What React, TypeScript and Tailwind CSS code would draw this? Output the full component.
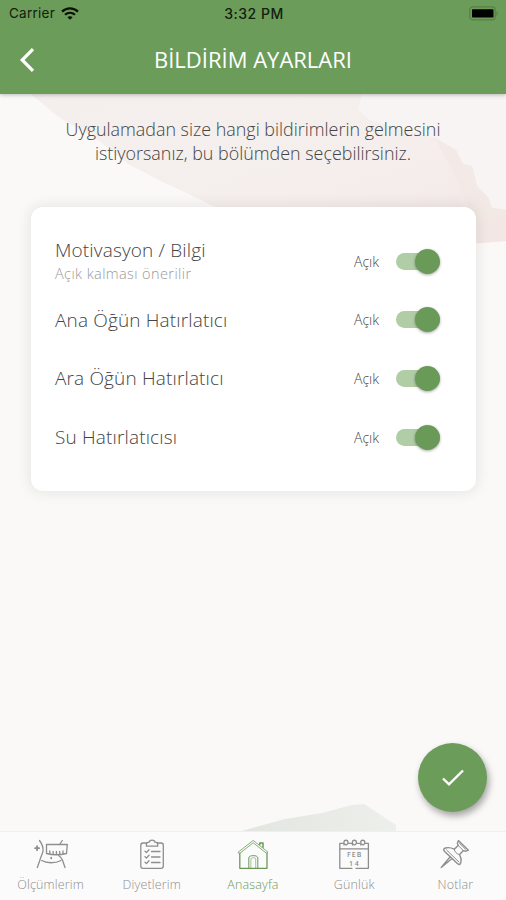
import type { ReactNode } from "react";

interface Reminder {
  title: string;
  hint?: string;
}

const reminders: Reminder[] = [
  { title: "Motivasyon / Bilgi", hint: "Açık kalması önerilir" },
  { title: "Ana Öğün Hatırlatıcı" },
  { title: "Ara Öğün Hatırlatıcı" },
  { title: "Su Hatırlatıcısı" },
];

function Backdrop() {
  return (
    <svg
      className="absolute inset-0 h-full w-full"
      viewBox="0 0 506 900"
      aria-hidden="true"
    >
      <defs>
        <linearGradient id="blush" x1="0" y1="0" x2="1" y2="1">
          <stop offset="0" stopColor="#f4efed" />
          <stop offset="0.6" stopColor="#f5eeec" />
          <stop offset="1" stopColor="#f2e8e5" />
        </linearGradient>
        <linearGradient id="leaf" x1="0" y1="0" x2="1" y2="0">
          <stop offset="0" stopColor="#e3e6e0" />
          <stop offset="1" stopColor="#edefea" />
        </linearGradient>
      </defs>
      <path d="M340 90H506V240H440Z" fill="#f7f4f3" />
      <path
        d="M30 93H362L358 110L371 121L394 127L435 138L456 150L463 164L472 166L477 186L488 197L492 208L506 210V241L470 244L300 250L213 206L195 197L163 182L128 164L98 140L60 118L44 105Z"
        fill="url(#blush)"
      />
      <path
        d="M435 138L456 150L463 164L472 166L477 186L488 197L492 208L506 210V241L478 243L470 210L455 175Z"
        fill="#f2e5e2"
        opacity="0.5"
      />
      <path
        d="M238 832L285 819L322 813L352 805L364 804L396 825V832Z"
        fill="url(#leaf)"
      />
    </svg>
  );
}

function StatusBar() {
  return (
    <div className="flex h-[27px] items-center justify-between pl-[9px] pr-[7px] text-[#12200e]">
      <div className="flex w-[120px] items-center gap-[6px]">
        <span className="text-[13.5px] tracking-[0.25px]">Carrier</span>
        <svg width="18" height="13" viewBox="0 0 18 13" fill="none" stroke="#0a1208">
          <path d="M1 4.6C5.6 0.3 12.4 0.3 17 4.6" strokeWidth="2.4" />
          <path d="M4 7.8C6.9 5.1 11.1 5.1 14 7.8" strokeWidth="2.2" />
          <path d="M9 12.8L6.4 10.2C7.9 8.9 10.1 8.9 11.6 10.2Z" fill="#0a1208" stroke="none" />
        </svg>
      </div>
      <span className="text-[14px] font-medium tracking-[0.5px]">3:32 PM</span>
      <div className="flex w-[120px] justify-end">
        <svg width="30" height="15" viewBox="0 0 30 15">
          <rect x="0.8" y="0.8" width="25.4" height="13" rx="3" fill="none" stroke="#568048" strokeWidth="1.2" />
          <rect x="3" y="3.2" width="21.5" height="8.4" rx="0.8" fill="#000" />
          <path d="M27.5 5C29.4 5.8 29.4 9 27.5 9.8Z" fill="#568048" />
        </svg>
      </div>
    </div>
  );
}

function Header() {
  return (
    <header className="relative h-[94px] bg-[#6c9c5a] font-['Inter','Liberation_Sans',sans-serif] shadow-[0_1px_4px_rgba(0,0,0,0.25)]">
      <StatusBar />
      <div className="grid h-[65px] grid-cols-[50px_1fr_50px] items-center">
        <button className="flex pl-[18px]" aria-label="Geri">
          <svg width="18" height="26" viewBox="0 0 18 26" fill="none" stroke="#fff" strokeWidth="3.2">
            <path d="M15 2.2L4.2 13L15 23.8" />
          </svg>
        </button>
        <h1 className="text-center font-['Open_Sans',sans-serif] text-[22px] whitespace-nowrap text-white">
          BİLDİRİM AYARLARI
        </h1>
      </div>
    </header>
  );
}

function Toggle() {
  return (
    <span role="switch" aria-checked="true" className="flex h-[25px] w-[44px] items-center">
      <span className="flex h-[17px] w-full items-center justify-end rounded-full bg-[#b0cda6]">
        <span className="h-[25px] w-[25px] shrink-0 rounded-full bg-[#6a9a58] shadow-[0_1px_3px_rgba(0,0,0,0.35)]" />
      </span>
    </span>
  );
}

function ReminderRow({ title, hint }: Reminder) {
  return (
    <div className="flex h-[58.6px] items-center justify-between">
      <div>
        <p className="text-[19px] leading-[26px] font-light tracking-[0.15px] text-[#444]">{title}</p>
        {hint && (
          <p className="text-[14.5px] leading-[22px] font-light tracking-[0.4px] text-[#999]">{hint}</p>
        )}
      </div>
      <div className="flex items-center gap-[17px]">
        <span className="text-[14px] font-light text-[#444]">Açık</span>
        <Toggle />
      </div>
    </div>
  );
}

function TabIcon({ children }: { children: ReactNode }) {
  return (
    <svg
      width="36"
      height="32"
      viewBox="0 0 36 32"
      fill="none"
      stroke="currentColor"
      strokeWidth="1.3"
      strokeLinecap="round"
      strokeLinejoin="round"
    >
      {children}
    </svg>
  );
}

const tabs: { label: string; active?: boolean; icon: ReactNode }[] = [
  {
    label: "Ölçümlerim",
    icon: (
      <>
        <path d="M6.5 1.5C9 5 10.6 8 10 12C9.6 15.5 7.5 18 6.8 21.5L4.3 28.5" />
        <path d="M29.3 1.5L26.6 5.5" />
        <path d="M13.5 5.5H34.3L33.5 14.5C27 16 19 16 13.5 14.5Z" />
        <path d="M16.8 12V15M20.1 12.5V15.3M23.4 12.5V15.5M26.7 12.5V15.3M30 12V15" />
        <path d="M25.7 16.5C27.8 18 29 19.7 29.6 21.5L32 28.5" />
        <path d="M8.7 21.5C14 24.5 22 24.5 28 21.5" />
        <path d="M18.2 18.7V19.3" strokeWidth="1.8" />
        <path d="M4.1 7.2V11.2M2.1 9.2H6.1" strokeWidth="1.8" />
      </>
    ),
  },
  {
    label: "Diyetlerim",
    icon: (
      <>
        <path d="M13 4H9C7.6 4 6.8 4.8 6.8 6.2V27C6.8 28.5 7.6 29.3 9 29.3H27C28.5 29.3 29.3 28.5 29.3 27V6.2C29.3 4.8 28.5 4 27 4H23" />
        <path d="M12.4 7.2V4.8C12.4 3.7 13.5 3.2 15.2 3.2C15.3 0.3 20.8 0.3 20.9 3.2C22.6 3.2 23.7 3.7 23.7 4.8V7.2Z" />
        <path d="M11 12.2L12.5 13.6L15 10.8M11 17.7L12.5 19.1L15 16.3M11 23.2L12.5 24.6L15 21.8" />
        <path d="M17.5 12.5H26M17.5 18H26M17.5 23.5H26" />
      </>
    ),
  },
  {
    label: "Anasayfa",
    active: true,
    icon: (
      <>
        <path d="M3.2 13.2L18.2 1.4L33 13.2L31.6 14.4L18.2 3.8L4.7 14.4Z" strokeWidth="0.8" />
        <path d="M4.8 14.2V29.3H32V14.2" />
        <path d="M13.8 29V19C13.8 15.8 22.8 15.8 22.8 19V29" strokeWidth="1" />
        <path d="M15.9 29V20C15.9 18.2 20.7 18.2 20.7 20V29" strokeWidth="0.6" />
        <path d="M24.8 5.4V4H28V8.3" strokeWidth="1.5" />
      </>
    ),
  },
  {
    label: "Günlük",
    icon: (
      <>
        <path d="M7.5 4.3H3.8V29.3H16M20 29.3H32.4V4.3H29M12.3 4.3H15.7M20.7 4.3H24" />
        <path d="M3.8 9.8H32.4" />
        <path d="M8 6V3.2C8 0.6 12 0.6 12 3.2C12 5.7 9.8 6.4 9 5.2M16.4 6V3.2C16.4 0.6 20.4 0.6 20.4 3.2C20.4 5.7 18.2 6.4 17.4 5.2M24.8 6V3.2C24.8 0.6 28.8 0.6 28.8 3.2C28.8 5.7 26.6 6.4 25.8 5.2" />
        <text x="18.7" y="18.2" textAnchor="middle" fontSize="7" fontWeight="600" letterSpacing="1" fill="currentColor" stroke="none">
          FEB
        </text>
        <text x="18.7" y="27" textAnchor="middle" fontSize="7" fontWeight="600" letterSpacing="1.6" fill="currentColor" stroke="none">
          14
        </text>
      </>
    ),
  },
  {
    label: "Notlar",
    icon: (
      <>
        <path d="M21.4 1.6L31.4 11.2L28.8 12.2L26.4 11.6L22.6 15.6C24.2 18.6 24.4 21.6 23.8 23.8C23.2 25.8 21.8 26 20.4 24.6L7.6 12.4C6.2 11 6.4 9.6 8.4 9C11 8.3 14.4 8.8 17.2 10.2L21.2 6.4L20.4 4.2Z" strokeWidth="1.4" />
        <path d="M17.2 10.2C17.6 13 19.8 15.2 22.6 15.6M9.5 11L22 23M21.2 6.4L26.4 11.6M22.5 4.3L28.5 10.2" strokeWidth="1" />
        <path d="M13 18L4.2 28.5L14.8 19.8" />
      </>
    ),
  },
];

function TabBar() {
  return (
    <nav className="relative grid h-[69px] grid-cols-5 border-t border-[#efefed] bg-[#fbfbfb]">
      {tabs.map(({ label, active, icon }) => (
        <button
          key={label}
          className={`flex flex-col items-center pt-[7px] ${active ? "text-[#6a9a58]" : "text-[#8e8e8e]"}`}
        >
          <TabIcon>{icon}</TabIcon>
          <span className="mt-[5px] text-[12.5px] leading-[18px] font-light tracking-[0.15px]">{label}</span>
        </button>
      ))}
    </nav>
  );
}

export default function App() {
  return (
    <div className="relative flex h-[900px] w-[506px] flex-col overflow-hidden bg-[#faf9f7] font-['Open_Sans','Noto_Sans',sans-serif]">
      <Backdrop />
      <Header />
      <main className="relative flex-1 px-[31px] pt-[24px]">
        <p className="text-center text-[17.9px] leading-[23.5px] font-light whitespace-nowrap text-[#444]">
          Uygulamadan size hangi bildirimlerin gelmesini
          <br />
          istiyorsanız, bu bölümden seçebilirsiniz.
        </p>
        <section className="mt-[42px] mr-[-1px] h-[284px] w-[445px] rounded-[12px] bg-white pt-[25px] pr-[36px] pl-[24px] shadow-[0_0_14px_2px_rgba(0,0,0,0.08)]">
          {reminders.map((item) => (
            <ReminderRow key={item.title} {...item} />
          ))}
        </section>
        <button
          aria-label="Kaydet"
          className="absolute right-[19px] bottom-[19px] flex h-[69px] w-[69px] items-center justify-center rounded-full bg-[#6c9c5a] shadow-[2px_4px_7px_rgba(0,0,0,0.35)]"
        >
          <svg width="24" height="18" viewBox="0 0 24 18" fill="none" stroke="#fff" strokeWidth="2.4">
            <path d="M2 9.5L8 15.3L22 1.5" />
          </svg>
        </button>
      </main>
      <TabBar />
    </div>
  );
}
